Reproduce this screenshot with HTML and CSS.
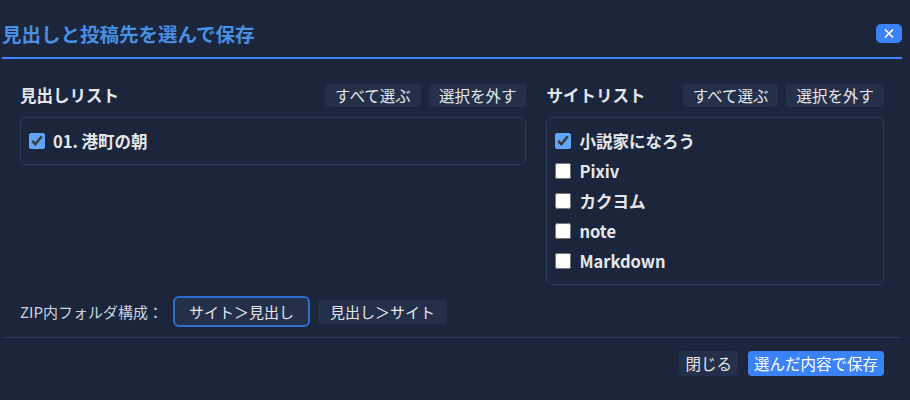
FILE: index.html
```html
<!DOCTYPE html>
<html lang="ja">
<head>
<meta charset="utf-8">
<title>見出しと投稿先を選んで保存</title>
<link rel="stylesheet" href="styles.css">
</head>
<body>
<div class="dialog">
  <div class="header">
    <h1 class="title">見出しと投稿先を選んで保存</h1>
    <button class="close" aria-label="閉じる">
      <svg width="10" height="9" viewBox="0 0 10 9"><path d="M1 0.5 L9 8.5 M9 0.5 L1 8.5" stroke="#fff" stroke-width="1.6" fill="none"/></svg>
    </button>
  </div>
  <div class="content">
    <div class="cols">
      <section class="col">
        <div class="col-head">
          <h2 class="col-title">見出しリスト</h2>
          <div class="btns">
            <button class="btn">すべて選ぶ</button>
            <button class="btn">選択を外す</button>
          </div>
        </div>
        <div class="list">
          <label class="item"><input type="checkbox" checked><span>01. 港町の朝</span></label>
        </div>
      </section>
      <section class="col">
        <div class="col-head">
          <h2 class="col-title">サイトリスト</h2>
          <div class="btns">
            <button class="btn">すべて選ぶ</button>
            <button class="btn">選択を外す</button>
          </div>
        </div>
        <div class="list">
          <label class="item"><input type="checkbox" checked><span>小説家になろう</span></label>
          <label class="item"><input type="checkbox"><span>Pixiv</span></label>
          <label class="item"><input type="checkbox"><span>カクヨム</span></label>
          <label class="item"><input type="checkbox"><span>note</span></label>
          <label class="item"><input type="checkbox"><span>Markdown</span></label>
        </div>
      </section>
    </div>
    <div class="zip-row">
      <span class="zip-label">ZIP内フォルダ構成：</span>
      <button class="btn opt active">サイト＞見出し</button>
      <button class="btn opt">見出し＞サイト</button>
    </div>
  </div>
  <div class="footer">
    <button class="btn fbtn">閉じる</button>
    <button class="btn fbtn primary">選んだ内容で保存</button>
  </div>
</div>
</body>
</html>
```

FILE: styles.css
```css
* { box-sizing: border-box; }
html, body {
  margin: 0;
  background: #1b253b;
  color: #e5e7eb;
  font-family: "Noto Sans CJK JP", "Noto Sans", sans-serif;
}
.dialog {
  width: 900px;
  margin-left: 2px;
}
.header {
  display: flex;
  justify-content: space-between;
  align-items: center;
  height: 59px;
  padding-top: 10px;
  border-bottom: 2px solid #3b82f6;
}
.title {
  margin: 0;
  font-size: 19.5px;
  font-weight: 700;
  color: #4a90e2;
  line-height: 1.2;
}
.close {
  width: 26px;
  height: 19px;
  border: 0;
  border-radius: 5px;
  background: #3b82f6;
  display: flex;
  align-items: center;
  justify-content: center;
  padding: 0;
  cursor: pointer;
}
.close svg { display: block; }
.content {
  padding: 25px 18px 0;
}
.cols {
  display: grid;
  grid-template-columns: 3fr 2fr;
  column-gap: 20px;
  align-items: start;
}
.col-head {
  display: flex;
  justify-content: space-between;
  align-items: center;
  height: 23px;
  margin-bottom: 10px;
}
.col-title {
  margin: 0;
  font-size: 16.5px;
  font-weight: 700;
  color: #e5e7eb;
  line-height: 1;
}
.btns {
  display: flex;
  gap: 8px;
}
.btn {
  font-family: inherit;
  font-size: 15.5px;
  color: #e5e7eb;
  background: #243049;
  border: 0;
  border-radius: 4px;
  height: 23px;
  padding: 0 10px;
  line-height: 23px;
  cursor: pointer;
}
.list {
  border: 1px solid #2d3a52;
  border-radius: 6px;
  padding: 8px;
}
.item {
  display: flex;
  align-items: center;
  gap: 8px;
  height: 30px;
  font-size: 16.5px;
  font-weight: 700;
  color: #e5e7eb;
}
.item input {
  width: 16px;
  height: 16px;
  margin: 0;
  accent-color: #60a5fa;
}
.zip-row {
  display: flex;
  align-items: center;
  gap: 8px;
  margin-top: 11px;
  height: 31px;
}
.zip-label {
  font-size: 15px;
  color: #cbd5e1;
  margin-right: 2px;
}
.opt {
  font-size: 15px;
  height: 24px;
  line-height: 24px;
  padding: 0 12px;
}
.opt.active {
  height: 31px;
  line-height: 27px;
  padding: 0 14px;
  border: 2px solid #2f6fd0;
  border-radius: 6px;
}
.footer {
  margin-top: 10px;
  border-top: 1px solid #2d3a52;
  display: flex;
  justify-content: flex-end;
  gap: 10px;
  padding: 13px 18px 0;
}
.fbtn {
  height: 25px;
  line-height: 25px;
  padding: 0 6px;
}
.primary {
  background: #3b82f6;
  color: #ffffff;
}
```
